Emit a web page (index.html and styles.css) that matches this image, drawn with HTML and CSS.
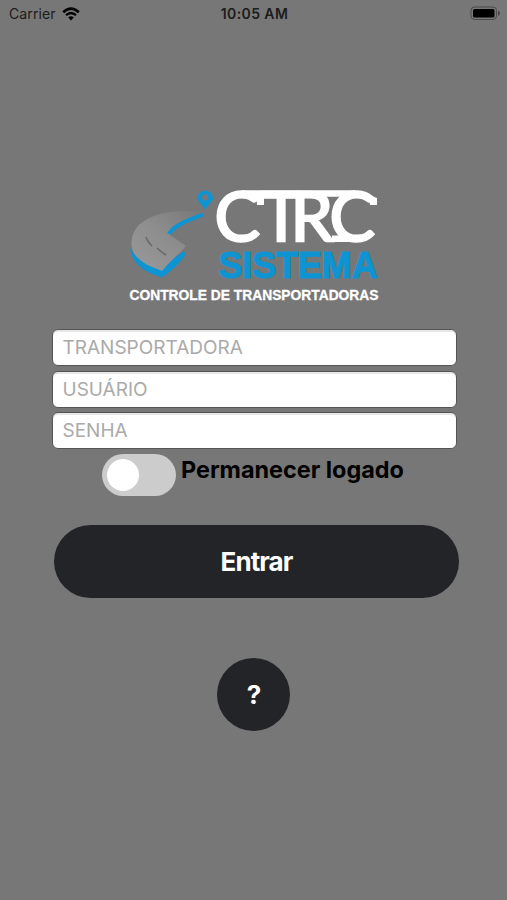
FILE: index.html
```html
<!DOCTYPE html>
<html lang="pt-BR">
<head>
    <meta charset="UTF-8">
    <meta name="viewport" content="width=device-width, initial-scale=1.0">
    <title>CTRC Sistema</title>
    <link rel="stylesheet" href="styles.css">
</head>
<body>
    <div class="status-bar">
        <div class="carrier">
            <span>Carrier</span>
            <svg class="wifi" viewBox="0 0 18 14" width="18" height="14">
                <path d="M1.2 5.2Q9 -2 16.8 5.2" stroke-width="2.6"/>
                <path d="M4 8.2Q9 3.7 14 8.2" stroke-width="2.3"/>
                <path class="dot" d="M6.2 10.4Q9 8 11.8 10.4L9 13.4Z"/>
            </svg>
        </div>
        <div class="time">10:05 AM</div>
        <svg class="battery" viewBox="0 0 31 15" width="31" height="15">
            <rect class="case" x="1" y="1" width="25.5" height="12.5" rx="3.5"/>
            <rect x="3" y="3" width="21.5" height="8.5" rx="1.5"/>
            <path class="tip" d="M28 4.5Q30 5.5 30 7.2T28 10Z"/>
        </svg>
    </div>

    <div class="container">
        <svg class="logo" viewBox="0 0 250 114" width="250" height="114">
            <defs>
                <linearGradient id="road" x1="0" y1="1" x2="1" y2="0">
                    <stop offset="0" stop-color="#999"/>
                    <stop offset="0.5" stop-color="#8e8e8e"/>
                    <stop offset="1" stop-color="#777"/>
                </linearGradient>
            </defs>
            <!-- Estrada -->
            <path class="edge" d="M1 59C2 72 13 83 33 88.500C41 83 49 76 56.500 66L55 62L32 78L6 66Z"/>
            <path fill="url(#road)" d="M76 23C50 20 24 23 11 35C0 45 0 62 9 69C16 76 24 78 33 82C40 73 49 66 57 57L41 46C47 36 61 31 75 26Z"/>
            <path class="lane" d="M17 48Q18 52 23 57"/>
            <path class="lane" d="M28 59Q32 63 37 66"/>
            <path class="route" d="M74 25.500C60 31 45 36 40 45"/>
            <path class="pin" fill-rule="evenodd" d="M76 20.500C72 15 68.500 12.500 68.500 8.500A7.800 7.800 0 0 1 84 8.500C84 12.500 80 15 76 20.500ZM76.200 5.200A3.100 3.100 0 1 0 76.200 11.400A3.100 3.100 0 1 0 76.200 5.200Z"/>
            <!-- Nome -->
            <text class="brand" x="85.500 132 161.500 200.500" y="52">CTRC</text>
            <path class="link" d="M113 4.500H226M203 49.800H227"/>
            <path class="serif" d="M127 3H135V16H128ZM240 6L248 9V16H241Z"/>
            <text class="sistema" x="89.500" y="89" textLength="159" lengthAdjust="spacingAndGlyphs">SISTEMA</text>
            <text class="slogan" x="0.500" y="111" textLength="249" lengthAdjust="spacingAndGlyphs">CONTROLE DE TRANSPORTADORAS</text>
        </svg>

        <form class="login-form">
            <input type="text" placeholder="TRANSPORTADORA">
            <input type="text" placeholder="USUÁRIO">
            <input type="password" placeholder="SENHA">
            <label class="remember">
                <span class="switch"></span>
                <span class="remember-text">Permanecer logado</span>
            </label>
            <button type="submit" class="button">Entrar</button>
        </form>
        <button class="help">?</button>
    </div>
</body>
</html>
```
FILE: styles.css
```css
* {
    box-sizing: border-box;
}

body {
    margin: 0;
    min-height: 900px;
    background-color: #777;
    font-family: Inter, sans-serif;
    color: #000;
}

/* Barra de status */
.status-bar {
    display: grid;
    grid-template-columns: 1fr auto 1fr;
    align-items: center;
    height: 27px;
    padding: 0 6px 0 9px;
    font-size: 14px;
    color: #1c1c1c;
}

.carrier {
    display: flex;
    align-items: center;
    gap: 6px;
    letter-spacing: 0.1px;
}

.wifi path {
    fill: none;
    stroke: #000;
}

.wifi .dot {
    fill: #000;
    stroke: none;
}

.time {
    margin-right: 1px;
    font-weight: 600;
    letter-spacing: 0.4px;
}

.battery {
    justify-self: end;
}

.battery .case {
    fill: none;
    stroke: #4a4a4a;
}

.battery .tip {
    fill: #4a4a4a;
}

.container {
    display: flex;
    flex-direction: column;
    align-items: center;
    padding-top: 162px;
}

/* Logo */
.logo {
    display: block;
    overflow: visible;
}

.edge,
.pin {
    fill: #0e94d2;
}

.route {
    fill: none;
    stroke: #0e94d2;
    stroke-width: 4;
}

.lane {
    fill: none;
    stroke: #686868;
    stroke-width: 1.5;
}

.brand {
    font-family: Lato, sans-serif;
    font-size: 68px;
    fill: #fff;
    stroke: #fff;
    stroke-width: 2.4;
}

.link {
    fill: none;
    stroke: #fff;
    stroke-width: 6.5;
}

.serif {
    fill: #fff;
}

.sistema {
    font-family: "Liberation Sans", Arial, sans-serif;
    font-size: 37px;
    font-weight: bold;
    fill: #0e94d2;
    stroke: #0e94d2;
    stroke-width: 1.2;
}

.slogan {
    font-family: "Liberation Sans", Arial, sans-serif;
    font-size: 14.5px;
    font-weight: bold;
    fill: #fff;
    stroke: #fff;
    stroke-width: 0.3;
}

/* Formulário */
.login-form {
    display: flex;
    flex-direction: column;
    width: 405px;
    margin-top: 26px;
}

.login-form input {
    width: 405px;
    height: 37px;
    margin: 0 0 4.5px 0.5px;
    padding: 0 10px;
    border: 1px solid #555;
    border-radius: 6px;
    background-color: #fff;
    box-shadow: inset 0 2px 1px #e6e6e6;
    font-family: Inter, sans-serif;
    font-size: 19px;
}

.login-form input::placeholder {
    color: #aaa;
}

.remember {
    display: flex;
    gap: 5px;
    margin-left: 51px;
}

.switch {
    width: 74px;
    height: 42px;
    padding: 5px;
    border-radius: 21px;
    background-color: #ccc;
}

.switch::before {
    content: "";
    display: block;
    width: 32px;
    height: 32px;
    border-radius: 50%;
    background-color: #fff;
}

.remember-text {
    padding-top: 2px;
    font-size: 23.4px;
    font-weight: 700;
    line-height: 28px;
    white-space: nowrap;
}

.button,
.help {
    padding: 0;
    border: none;
    background-color: #222427;
    color: #fff;
    font-family: Inter, sans-serif;
    font-size: 26px;
    font-weight: 700;
    letter-spacing: -0.9px;
    cursor: pointer;
}

.button {
    width: 405px;
    height: 73px;
    margin-top: 29px;
    margin-left: 3px;
    border-radius: 37px;
}

.help {
    width: 73px;
    height: 73px;
    margin-top: 60px;
    border-radius: 50%;
}
```
